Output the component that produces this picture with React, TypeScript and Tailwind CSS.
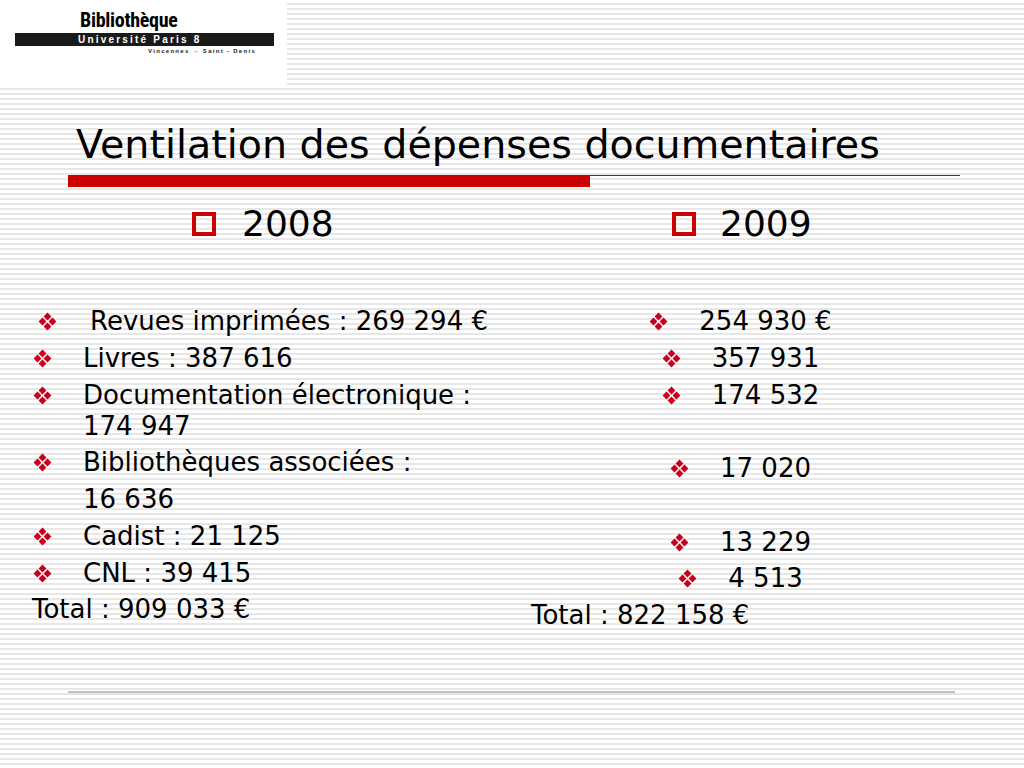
import React from "react";

const Diamonds = () => (
  <svg width="19" height="19" viewBox="0 0 19 19" className="shrink-0">
    <path d="M9.5 0.6 L13.4 4.5 L9.5 8.4 L5.6 4.5 Z" fill="#c8001e" />
    <path d="M4.5 5.6 L8.4 9.5 L4.5 13.4 L0.6 9.5 Z" fill="#c8001e" />
    <path d="M14.5 5.6 L18.4 9.5 L14.5 13.4 L10.6 9.5 Z" fill="#c8001e" />
    <path d="M9.5 10.6 L13.4 14.5 L9.5 18.4 L5.6 14.5 Z" fill="#c8001e" />
  </svg>
);

const Square = () => (
  <div className="w-[24px] h-[24px] border-[4px] border-[#cc0000] shrink-0" />
);

const LeftItem = ({ children, first }: { children: React.ReactNode; first?: boolean }) => (
  <div className={first ? "flex ml-[5px]" : "flex mt-[5.75px]"}>
    <div className={first ? "w-[52px] h-[31px] flex items-center" : "w-[50px] h-[31px] flex items-center"}>
      <Diamonds />
    </div>
    <div className="leading-[31px]">{children}</div>
  </div>
);

const RightItem = ({ children, first }: { children: React.ReactNode; first?: boolean }) => (
  <div className={first ? "flex justify-center" : "flex justify-center mt-[5.75px]"}>
    <div className="flex items-center h-[31px] gap-[31px]">
      <Diamonds />
      <span className="leading-[31px]">{children}</span>
    </div>
  </div>
);

export default function App() {
  return (
    <div className="w-[1024px] h-[768px] overflow-hidden text-black font-['DejaVu_Sans','Verdana',sans-serif] bg-[repeating-linear-gradient(to_bottom,#ffffff_0px,#ffffff_3px,#e7e7e7_3px,#e7e7e7_5px)]">
      {/* logo */}
      <div className="w-[287px] h-[87px] bg-white flex flex-col">
        <div className="pl-[80px] pt-[8px] h-[33px] text-[20px] leading-[24px] font-bold tracking-[-0.3px] font-['Liberation_Sans_Narrow','Roboto_Condensed','Liberation_Sans',sans-serif]">
          Bibliothèque
        </div>
        <div className="ml-[15px] w-[259px] h-[13px] bg-[#1a1a1a] flex items-center pl-[63px]">
          <span className="text-white text-[10px] leading-[13px] font-bold tracking-[2.2px] font-['Liberation_Sans',sans-serif]">
            Université Paris 8
          </span>
        </div>
        <div className="pl-[148px] pt-[1px] text-[6px] leading-[8px] font-bold tracking-[1.3px] text-[#222] font-['Liberation_Sans',sans-serif]">
          Vincennes → Saint - Denis
        </div>
      </div>

      {/* title */}
      <h1 className="mt-[34px] pl-[76px] text-[39.6px] leading-[46px] font-normal">
        Ventilation des dépenses documentaires
      </h1>
      <div className="mt-[8px] flex items-start pl-[68px]">
        <div className="w-[522px] h-[12px] bg-[#cc0000]" />
        <div className="w-[370px] h-px bg-[#cc0000]" />
      </div>

      {/* columns */}
      <div className="mt-[16px] h-[488px] flex text-[26px]">
        <div className="w-[500px] flex flex-col">
          <div className="pl-[192px] h-[42px] flex items-center">
            <Square />
            <span className="ml-[26px] text-[36px] leading-[42px]">2008</span>
          </div>
          <div className="mt-[61px] pl-[33px] flex flex-col">
            <LeftItem first>Revues imprimées : 269 294 €</LeftItem>
            <LeftItem>Livres : 387 616</LeftItem>
            <LeftItem>
              Documentation électronique :<br />174 947
            </LeftItem>
            <LeftItem>Bibliothèques associées :</LeftItem>
            <div className="mt-[5.75px] pl-[50px] leading-[31px]">16 636</div>
            <LeftItem>Cadist : 21 125</LeftItem>
            <LeftItem>CNL : 39 415</LeftItem>
            <div className="mt-[5.75px] -ml-[1px] leading-[31px]">Total : 909 033 €</div>
          </div>
        </div>
        <div className="w-[481px] flex flex-col">
          <div className="pl-[172px] h-[42px] flex items-center">
            <Square />
            <span className="ml-[24px] text-[36px] leading-[42px]">2009</span>
          </div>
          <div className="mt-[61px] flex flex-col">
            <RightItem first>254 930 €</RightItem>
            <RightItem>357 931</RightItem>
            <RightItem>174 532</RightItem>
            <div className="mt-[5.75px] h-[31px]" />
            <RightItem>17 020</RightItem>
            <div className="mt-[5.75px] h-[31px]" />
            <RightItem>13 229</RightItem>
            <RightItem>4 513</RightItem>
            <div className="mt-[5.75px] pl-[31px] leading-[31px]">Total : 822 158 €</div>
          </div>
        </div>
      </div>

      {/* bottom rule */}
      <div className="ml-[68px] w-[887px] h-[2px] bg-[#cbbdbd]" />
    </div>
  );
}
